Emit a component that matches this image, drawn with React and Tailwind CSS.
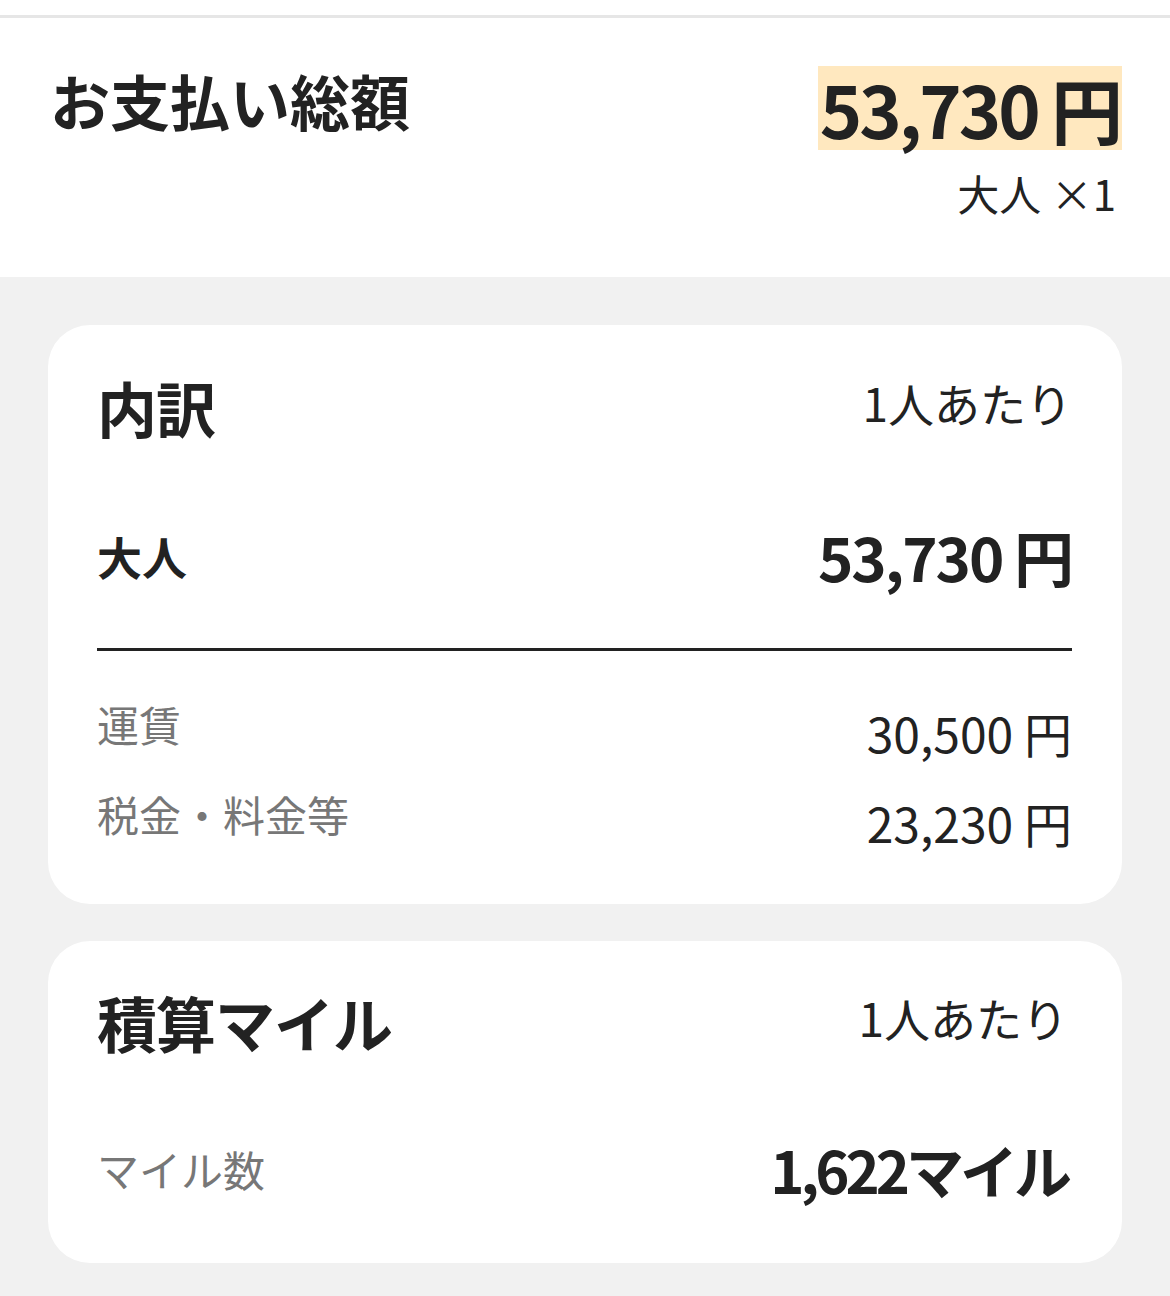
import React from "react";

function Row({ label, value }) {
  return (
    <div className="flex items-start justify-between">
      <span className="text-[42px] leading-none text-[#777777]">{label}</span>
      <span className="mt-[5px] text-[48px] leading-none text-[#222222]">{value}</span>
    </div>
  );
}

function CardHeader({ title }) {
  return (
    <div className="flex items-center justify-between">
      <h2 className="text-[60px] font-bold leading-none tracking-[-1px]">{title}</h2>
      <span className="mb-[10px] text-[46px] leading-none">1人あたり</span>
    </div>
  );
}

export default function App() {
  return (
    <div className="min-h-screen bg-[#f1f1f1] font-['Noto_Sans_CJK_JP','Noto_Sans',sans-serif] text-[#222222]">
      <div className="bg-white pt-[15px]">
        <div className="border-t-[3px] border-[#e6e6e6] pr-[48px] pl-[50px] pt-[48px] pb-[63px]">
          <div className="flex items-start justify-between">
            <h1 className="mt-[4px] text-[60px] font-bold leading-none">お支払い総額</h1>
            <div className="flex flex-col items-end">
              <div className="bg-[#ffe8bf] px-[2px] text-[72px] font-bold leading-[84px] tracking-[-3px]">
                53,730 円
              </div>
              <div className="mt-[22px] mr-[6px] text-[42px] leading-none">大人 ×1</div>
            </div>
          </div>
        </div>
      </div>

      <div className="flex flex-col gap-[37px] px-[48px] pt-[48px] pb-[34px]">
        <section className="rounded-[42px] bg-white pt-[52px] pb-[58px] pl-[49px] pr-[50px]">
          <CardHeader title="内訳" />
          <div className="mt-[89px] flex items-center justify-between">
            <span className="text-[45px] font-bold leading-none">大人</span>
            <span className="text-[60px] font-bold leading-none tracking-[-2px]">53,730 円</span>
          </div>
          <div className="mt-[62px] h-[3px] bg-[#222222]" />
          <div className="mt-[52px] flex flex-col gap-[37px]">
            <Row label="運賃" value="30,500 円" />
            <Row label="税金・料金等" value="23,230 円" />
          </div>
        </section>

        <section className="rounded-[42px] bg-white pt-[51px] pb-[65px] pl-[49px] pr-[54px]">
          <CardHeader title="積算マイル" />
          <div className="mt-[88px] flex items-center justify-between">
            <span className="text-[42px] leading-none text-[#777777]">マイル数</span>
            <span className="text-[58px] font-bold leading-none tracking-[-4px]">1,622マイル</span>
          </div>
        </section>
      </div>
    </div>
  );
}
